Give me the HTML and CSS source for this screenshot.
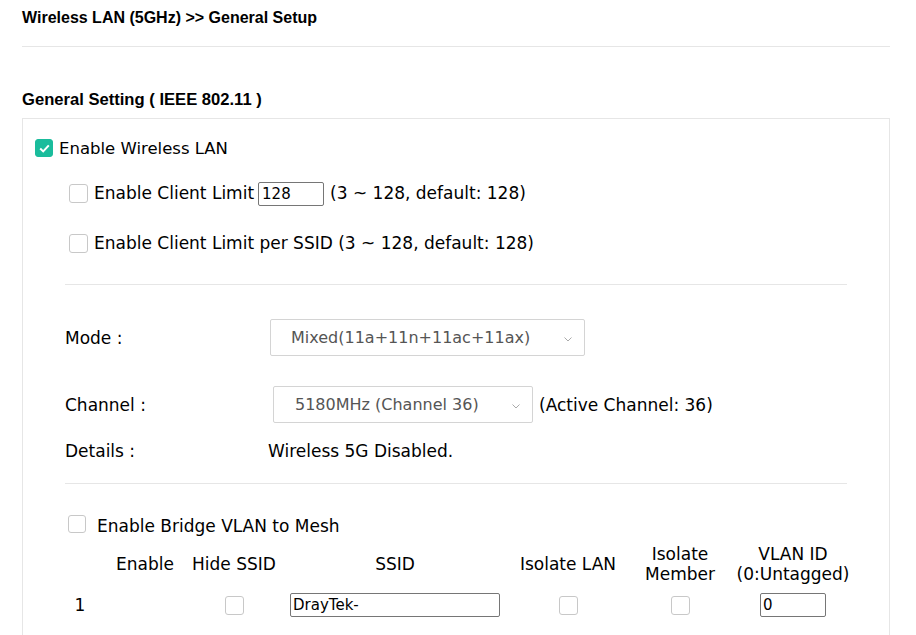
FILE: index.html
```html
<!DOCTYPE html>
<html lang="en">
<head>
  <meta charset="UTF-8" />
  <title>Wireless LAN (5GHz) General Setup</title>
  <link rel="stylesheet" href="styles.css">
</head>
<body>
  <div class="page">
    <div class="page-title">Wireless LAN (5GHz) &gt;&gt; General Setup</div>
    <div class="rule"></div>
    <div class="section-title">General Setting ( IEEE 802.11 )</div>

    <div class="panel">
      <label class="row row-main">
        <span class="cb checked">
          <svg width="11" height="9" viewBox="0 0 11 9"><path d="M1.2 4.6 L4.2 7.4 L9.8 1.4" fill="none" stroke="#fff" stroke-width="2"/></svg>
        </span>
        Enable Wireless LAN
      </label>

      <div class="row row-sub row-limit">
        <span class="cb"></span>
        <span class="txt">Enable Client Limit</span>
        <input class="num" type="text" value="128">
        <span class="txt">(3 ~ 128, default: 128)</span>
      </div>

      <div class="row row-sub row-ssid">
        <span class="cb"></span>
        <span class="txt">Enable Client Limit per SSID (3 ~ 128, default: 128)</span>
      </div>

      <div class="sep"></div>

      <div class="field field-mode">
        <span class="label">Mode :</span>
        <div class="select select-mode">
          <span>Mixed(11a+11n+11ac+11ax)</span>
          <svg class="chev" width="8" height="5" viewBox="0 0 8 5"><path d="M0.5 0.5 L4 4 L7.5 0.5" fill="none" stroke="#aaa" stroke-width="1"/></svg>
        </div>
      </div>

      <div class="field field-channel">
        <span class="label">Channel :</span>
        <div class="select select-channel">
          <span>5180MHz (Channel 36)</span>
          <svg class="chev" width="8" height="5" viewBox="0 0 8 5"><path d="M0.5 0.5 L4 4 L7.5 0.5" fill="none" stroke="#aaa" stroke-width="1"/></svg>
        </div>
        <span class="after">(Active Channel: 36)</span>
      </div>

      <div class="field field-details">
        <span class="label">Details :</span>
        <span class="value">Wireless 5G Disabled.</span>
      </div>

      <div class="sep sep-low"></div>

      <div class="row row-bridge">
        <span class="cb"></span>
        <span class="txt">Enable Bridge VLAN to Mesh</span>
      </div>

      <div class="vlan-table">
        <div class="th"></div>
        <div class="th">Enable</div>
        <div class="th">Hide SSID</div>
        <div class="th">SSID</div>
        <div class="th">Isolate LAN</div>
        <div class="th">Isolate<br>Member</div>
        <div class="th">VLAN ID<br>(0:Untagged)</div>

        <div class="td">1</div>
        <div class="td"></div>
        <div class="td"><span class="cb"></span></div>
        <div class="td"><input class="ssid" type="text" value="DrayTek-"></div>
        <div class="td"><span class="cb"></span></div>
        <div class="td"><span class="cb"></span></div>
        <div class="td"><input class="vid" type="text" value="0"></div>
      </div>
    </div>
  </div>
</body>
</html>
```

FILE: styles.css
```css
html, body {
  margin: 0;
  padding: 0;
  background: #fff;
  color: #000;
  font-family: "DejaVu Sans", Verdana, sans-serif;
  font-size: 17px;
  overflow: hidden;
}
.page {
  padding: 0 26px 0 22px;
}
.page-title {
  font-family: "Liberation Sans", Arial, sans-serif;
  font-weight: bold;
  font-size: 16px;
  height: 36px;
  line-height: 36px;
}
.rule {
  height: 1px;
  background: #e6e6e6;
  margin-top: 10px;
}
.section-title {
  font-family: "Liberation Sans", Arial, sans-serif;
  font-weight: bold;
  font-size: 16.6px;
  margin-top: 44px;
  height: 18px;
  line-height: 18px;
}
.panel {
  border: 1px solid #e6e6e6;
  margin-top: 9px;
  height: 560px;
  box-sizing: border-box;
}

/* checkboxes */
.cb {
  display: inline-flex;
  align-items: center;
  justify-content: center;
  width: 19px;
  height: 19px;
  border: 1px solid #c8c8c8;
  border-radius: 3px;
  box-sizing: border-box;
  background: #fff;
  flex: none;
}
.cb.checked {
  width: 18px;
  height: 18px;
  background: #1abc9c;
  border-color: #1abc9c;
}

.row {
  display: flex;
  align-items: center;
}
.row-main {
  height: 28px;
  margin-top: 15px;
  padding-left: 12px;
  gap: 6px;
  font-size: 16.5px;
}
.row-sub {
  padding-left: 46px;
  gap: 6px;
}
.row-limit {
  height: 30px;
  margin-top: 16px;
}
.row-limit .num {
  margin-top: 2px;
  margin-left: -2px;
}
.row-ssid {
  height: 30px;
  margin-top: 20px;
}
.num {
  width: 66px;
  height: 24px;
  box-sizing: border-box;
  border: 1px solid #767676;
  border-radius: 2px;
  padding: 0 3px;
  font-family: "DejaVu Sans", sans-serif;
  font-size: 15px;
  color: #000;
}

.sep {
  height: 1px;
  background: #e6e6e6;
  margin: 26px 42px 0 42px;
}
.sep-low {
  margin-top: 20px;
}

.field {
  display: flex;
  align-items: center;
  padding-left: 42px;
}
.field .label {
  width: 205px;
  flex: none;
}
.field-mode {
  height: 37px;
  margin-top: 34px;
}
.field-channel {
  height: 37px;
  margin-top: 30px;
}
.field-channel .label {
  width: 208px;
}
.field-details {
  height: 24px;
  margin-top: 16px;
}
.field-details .value {
  margin-left: -2px;
}
.select {
  display: flex;
  align-items: center;
  justify-content: space-between;
  height: 37px;
  box-sizing: border-box;
  border: 1px solid #d4d4d4;
  border-radius: 2px;
  padding: 0 12px 0 20px;
  color: #555;
  font-size: 16px;
}
.select-mode {
  width: 315px;
}
.select-channel {
  width: 260px;
  padding-left: 21px;
}
.chev {
  margin-top: 4px;
}
.after {
  margin-left: 6px;
}

.row-bridge {
  height: 28px;
  margin-top: 28px;
  padding-left: 45px;
  gap: 11px;
}
.row-bridge .cb {
  width: 18px;
  height: 18px;
  margin-top: -4px;
}

.vlan-table {
  display: grid;
  grid-template-columns: 40px 90px 88px 234px 112px 112px 114px;
  margin-left: 37px;
  margin-top: 2px;
}
.th {
  display: flex;
  align-items: center;
  justify-content: center;
  text-align: center;
  height: 44px;
  line-height: 20px;
}
.td {
  display: flex;
  align-items: center;
  justify-content: center;
  height: 34px;
  margin-top: 2px;
}
.ssid {
  width: 210px;
  height: 24px;
  box-sizing: border-box;
  border: 1px solid #767676;
  border-radius: 2px;
  padding: 0 2px;
  font-family: "DejaVu Sans", sans-serif;
  font-size: 15px;
  color: #000;
}
.vid {
  width: 66px;
  height: 24px;
  box-sizing: border-box;
  border: 1px solid #767676;
  border-radius: 2px;
  padding: 0 2px;
  font-family: "DejaVu Sans", sans-serif;
  font-size: 15px;
  color: #000;
}
```
